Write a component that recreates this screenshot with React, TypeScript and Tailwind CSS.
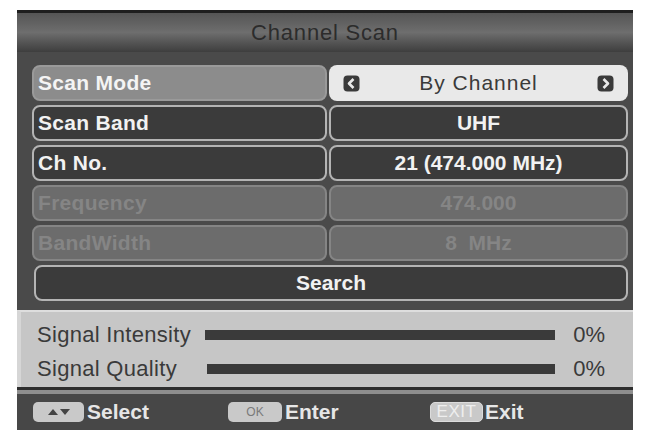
import React from "react"

const font = { fontFamily: '"Liberation Sans", Arial, sans-serif' }

function Chevron({ dir }: { dir: "left" | "right" }) {
  return (
    <svg width="17" height="17" viewBox="0 0 17 17">
      <rect x="0.5" y="0.5" width="16" height="16" rx="4" fill="#3a3a3a" />
      {dir === "left" ? (
        <path d="M10.5 4 L6 8.5 L10.5 13" stroke="#e8e8e8" strokeWidth="2.6" fill="none" strokeLinejoin="round" />
      ) : (
        <path d="M6.5 4 L11 8.5 L6.5 13" stroke="#e8e8e8" strokeWidth="2.6" fill="none" strokeLinejoin="round" />
      )}
    </svg>
  )
}

type Row = { label: string; value: string; disabled?: boolean }

const rows: Row[] = [
  { label: "Scan Band", value: "UHF" },
  { label: "Ch No.", value: "21 (474.000 MHz)" },
  { label: "Frequency", value: "474.000", disabled: true },
  { label: "BandWidth", value: "8  MHz", disabled: true },
]

function MenuRow({ row }: { row: Row }) {
  const cell = row.disabled
    ? "h-full rounded-[8px] border-2 border-[#858585] bg-[#6c6c6c] flex items-center text-[#858585]"
    : "h-full rounded-[8px] border-2 border-[#b4b4b4] bg-[#3b3b3b] flex items-center text-[#f2f2f2]"
  return (
    <div className="h-[36px] grid grid-cols-[295px_299px] gap-[2px]">
      <div className={cell + " pl-[4px] text-[21px] font-bold tracking-[0.3px]"}>{row.label}</div>
      <div className={cell + " justify-center text-[21px] font-bold whitespace-pre"}>{row.value}</div>
    </div>
  )
}

function Key({ children, w }: { children: React.ReactNode; w: string }) {
  return (
    <div className={"h-[20px] rounded-[5px] bg-[#c9c9c9] flex items-center justify-center " + w}>
      {children}
    </div>
  )
}

export default function App() {
  return (
    <div className="w-[646px] h-[434px] bg-white pt-[10px] pl-[17px]" style={font}>
      <div className="w-[616px] h-[420px] bg-[#4a4a4a] flex flex-col overflow-hidden">
        {/* title bar */}
        <div className="h-[42px] border-t-[3px] border-[#1e1e1e] bg-gradient-to-b from-[#555555] via-[#6e6e6e] to-[#3e3e3e] flex items-center justify-center">
          <span className="text-[22px] text-[#2c2c2c] tracking-[0.8px]">Channel Scan</span>
        </div>

        {/* menu */}
        <div className="flex flex-col gap-[4px] pl-[15px] pr-[5px] pt-[13px] h-[258px]">
          <div className="h-[36px] grid grid-cols-[295px_299px] gap-[2px]">
            <div className="h-full rounded-[8px] bg-[#8c8c8c] border-2 border-[#9a9a9a] flex items-center pl-[4px] text-[21px] font-bold text-[#f4f4f4] tracking-[0.3px]">
              Scan Mode
            </div>
            <div className="h-full rounded-[8px] bg-[#e9e9e9] flex items-center justify-between px-[14px]">
              <Chevron dir="left" />
              <span className="text-[21px] text-[#3a3a3a] tracking-[1px]">By Channel</span>
              <Chevron dir="right" />
            </div>
          </div>
          {rows.map((r) => (
            <MenuRow key={r.label} row={r} />
          ))}
          <div className="h-[36px] ml-[2px] rounded-[8px] border-2 border-[#b4b4b4] bg-[#3b3b3b] flex items-center justify-center text-[21px] font-bold text-[#f2f2f2]">
            Search
          </div>
        </div>

        {/* signal panel */}
        <div className="h-[77px] bg-[#c6c6c6] border-t-2 border-[#dedede] border-l-[4px] border-l-[#d6d6d6] flex flex-col justify-center gap-[8px] pt-[4px] pl-[16px] pr-[28px] text-[#3a3a3a]">
          <div className="flex items-center leading-[26px]">
            <span className="w-[168px] text-[22px] tracking-[0.3px]">Signal Intensity</span>
            <div className="flex-1 h-[10px] bg-[#3a3a3a]" />
            <span className="w-[50px] text-right text-[22px]">0%</span>
          </div>
          <div className="flex items-center leading-[26px]">
            <span className="w-[168px] text-[22px] tracking-[0.3px]">Signal Quality</span>
            <div className="flex-1 h-[10px] bg-[#3a3a3a] ml-[2px]" />
            <span className="w-[50px] text-right text-[22px]">0%</span>
          </div>
        </div>

        {/* separator */}
        <div className="h-[3px] bg-[#2e2e2e]" />
        <div className="h-[4px] bg-[#8e8e8e]" />

        {/* footer */}
        <div className="flex-1 bg-[#474747] flex items-center pl-[16px] text-[21px] font-bold text-[#e6e6e6]">
          <div className="w-[195px] flex items-center gap-[3px]">
            <Key w="w-[51px]">
              <svg width="24" height="10" viewBox="0 0 24 10">
                <path d="M1 8 L6 2 L11 8 Z" fill="#444" />
                <path d="M13 2 L23 2 L18 8 Z" fill="#444" />
              </svg>
            </Key>
            <span>Select</span>
          </div>
          <div className="w-[202px] flex items-center gap-[3px]">
            <Key w="w-[54px]">
              <span className="text-[12px] font-normal text-[#7a7a7a]">OK</span>
            </Key>
            <span>Enter</span>
          </div>
          <div className="flex items-center gap-[2px]">
            <Key w="w-[53px] bg-[#b4b4b4] border border-[#dcdcdc]">
              <span className="text-[17px] font-normal text-[#eeeeee] tracking-[0.5px]">EXIT</span>
            </Key>
            <span>Exit</span>
          </div>
        </div>
      </div>
    </div>
  )
}
